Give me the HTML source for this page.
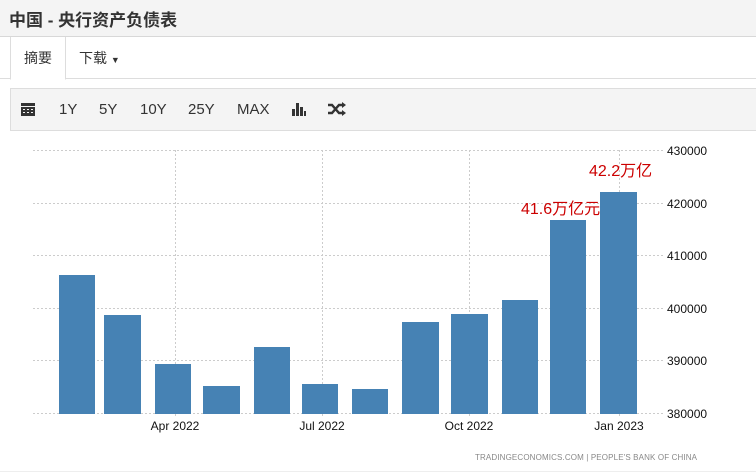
<!DOCTYPE html>
<html><head><meta charset="utf-8"><style>
body{margin:0;width:756px;height:473px;overflow:hidden;background:#fff;font-family:"Liberation Sans","Noto Sans CJK SC",sans-serif;}
.title{position:absolute;left:0;top:0;width:756px;height:36px;background:#f4f4f4;border-bottom:1px solid #d8d8d8;}
.title span{position:absolute;left:9px;top:6px;font-size:17px;font-weight:bold;color:#333;}
.tabs{position:absolute;left:0;top:37px;width:756px;height:41px;border-bottom:1px solid #ddd;}
.tab1{position:absolute;left:10px;top:0;width:54px;height:42px;border:1px solid #ddd;border-bottom:1px solid #fff;border-top:none;background:#fff;font-size:14px;color:#333;text-align:center;line-height:42px;}
.tab2{position:absolute;left:79px;top:0;line-height:42px;font-size:14px;color:#333;}
.tb{position:absolute;left:10px;top:88px;width:746px;height:41px;background:#f4f4f4;border:1px solid #ddd;border-right:none;}
.tb span{position:absolute;top:12px;font-size:15px;color:#333;}
</style></head><body>
<div class="title"><span>中国 - 央行资产负债表</span></div>
<div class="tabs"><div class="tab1">摘要</div><div class="tab2">下载 <span style="font-size:9px">▼</span></div></div>
<div class="tb">
<svg style="position:absolute;left:10px;top:13px" width="15" height="15" viewBox="0 0 15 15"><rect x="0" y="1" width="14" height="3" fill="#333"/><rect x="0" y="5" width="14" height="9" fill="#333"/><g fill="#f4f4f4"><rect x="2" y="7" width="2" height="1"/><rect x="6" y="7" width="2" height="1"/><rect x="10" y="7" width="2" height="1"/><rect x="2" y="10" width="2" height="1"/><rect x="6" y="10" width="2" height="1"/><rect x="10" y="10" width="2" height="1"/></g></svg>
<span style="left:48px">1Y</span><span style="left:88px">5Y</span><span style="left:129px">10Y</span><span style="left:177px">25Y</span><span style="left:226px">MAX</span>
<svg style="position:absolute;left:281px;top:13px" width="14" height="14"><rect x="0" y="7" width="3" height="7" fill="#333"/><rect x="4" y="1" width="3" height="13" fill="#333"/><rect x="8" y="5" width="3" height="9" fill="#333"/><rect x="12" y="9" width="2" height="5" fill="#333"/></svg>
<svg style="position:absolute;left:317px;top:13px" width="18" height="14" viewBox="0 0 18 14"><path d="M0 3h4l7 8h4M0 11h4l7-8h4" stroke="#333" stroke-width="2.4" fill="none"/><path d="M14 0l4 3-4 3zM14 8l4 3-4 3z" fill="#333"/></svg>
</div>
<svg style="position:absolute;left:0;top:130px" width="756" height="343" viewBox="0 130 756 343">
<g stroke="#ccc" stroke-dasharray="2,2" stroke-width="1">
<line x1="33" y1="150.5" x2="665" y2="150.5"/><line x1="33" y1="203.5" x2="665" y2="203.5"/><line x1="33" y1="255.5" x2="665" y2="255.5"/><line x1="33" y1="308.5" x2="665" y2="308.5"/><line x1="33" y1="360.5" x2="665" y2="360.5"/><line x1="33" y1="413.5" x2="665" y2="413.5"/>
<line x1="175.5" y1="150" x2="175.5" y2="418"/><line x1="322.5" y1="150" x2="322.5" y2="418"/><line x1="469.5" y1="150" x2="469.5" y2="418"/><line x1="619.5" y1="150" x2="619.5" y2="418"/>
</g>
<g fill="#4682b4">
<rect x="59" y="275" width="36" height="139"/><rect x="104" y="315" width="37" height="99"/><rect x="155" y="364" width="36" height="50"/><rect x="203" y="386" width="37" height="28"/><rect x="254" y="347" width="36" height="67"/><rect x="302" y="384" width="36" height="30"/><rect x="352" y="389" width="36" height="25"/><rect x="402" y="322" width="37" height="92"/><rect x="451" y="314" width="37" height="100"/><rect x="502" y="300" width="36" height="114"/><rect x="550" y="220" width="36" height="194"/><rect x="600" y="192" width="37" height="222"/>
</g>
<g font-size="12" fill="#111" font-family="Liberation Sans,sans-serif">
<text x="667" y="155">430000</text><text x="667" y="208">420000</text><text x="667" y="260">410000</text><text x="667" y="313">400000</text><text x="667" y="365">390000</text><text x="667" y="418">380000</text>
<text x="175" y="430" text-anchor="middle">Apr 2022</text><text x="322" y="430" text-anchor="middle">Jul 2022</text><text x="469" y="430" text-anchor="middle">Oct 2022</text><text x="619" y="430" text-anchor="middle">Jan 2023</text>
</g>
<g font-size="16" fill="#cc0000" font-family="Liberation Sans,'Noto Sans CJK SC',sans-serif">
<text x="589" y="176">42.2万亿</text><text x="521" y="214">41.6万亿元</text>
</g>
<text x="475" y="460" font-size="8" fill="#888" font-family="Liberation Sans,sans-serif" textLength="222">TRADINGECONOMICS.COM  |  PEOPLE'S BANK OF CHINA</text>
<line x1="0" y1="471.5" x2="756" y2="471.5" stroke="#eee"/>
</svg>
</body></html>
